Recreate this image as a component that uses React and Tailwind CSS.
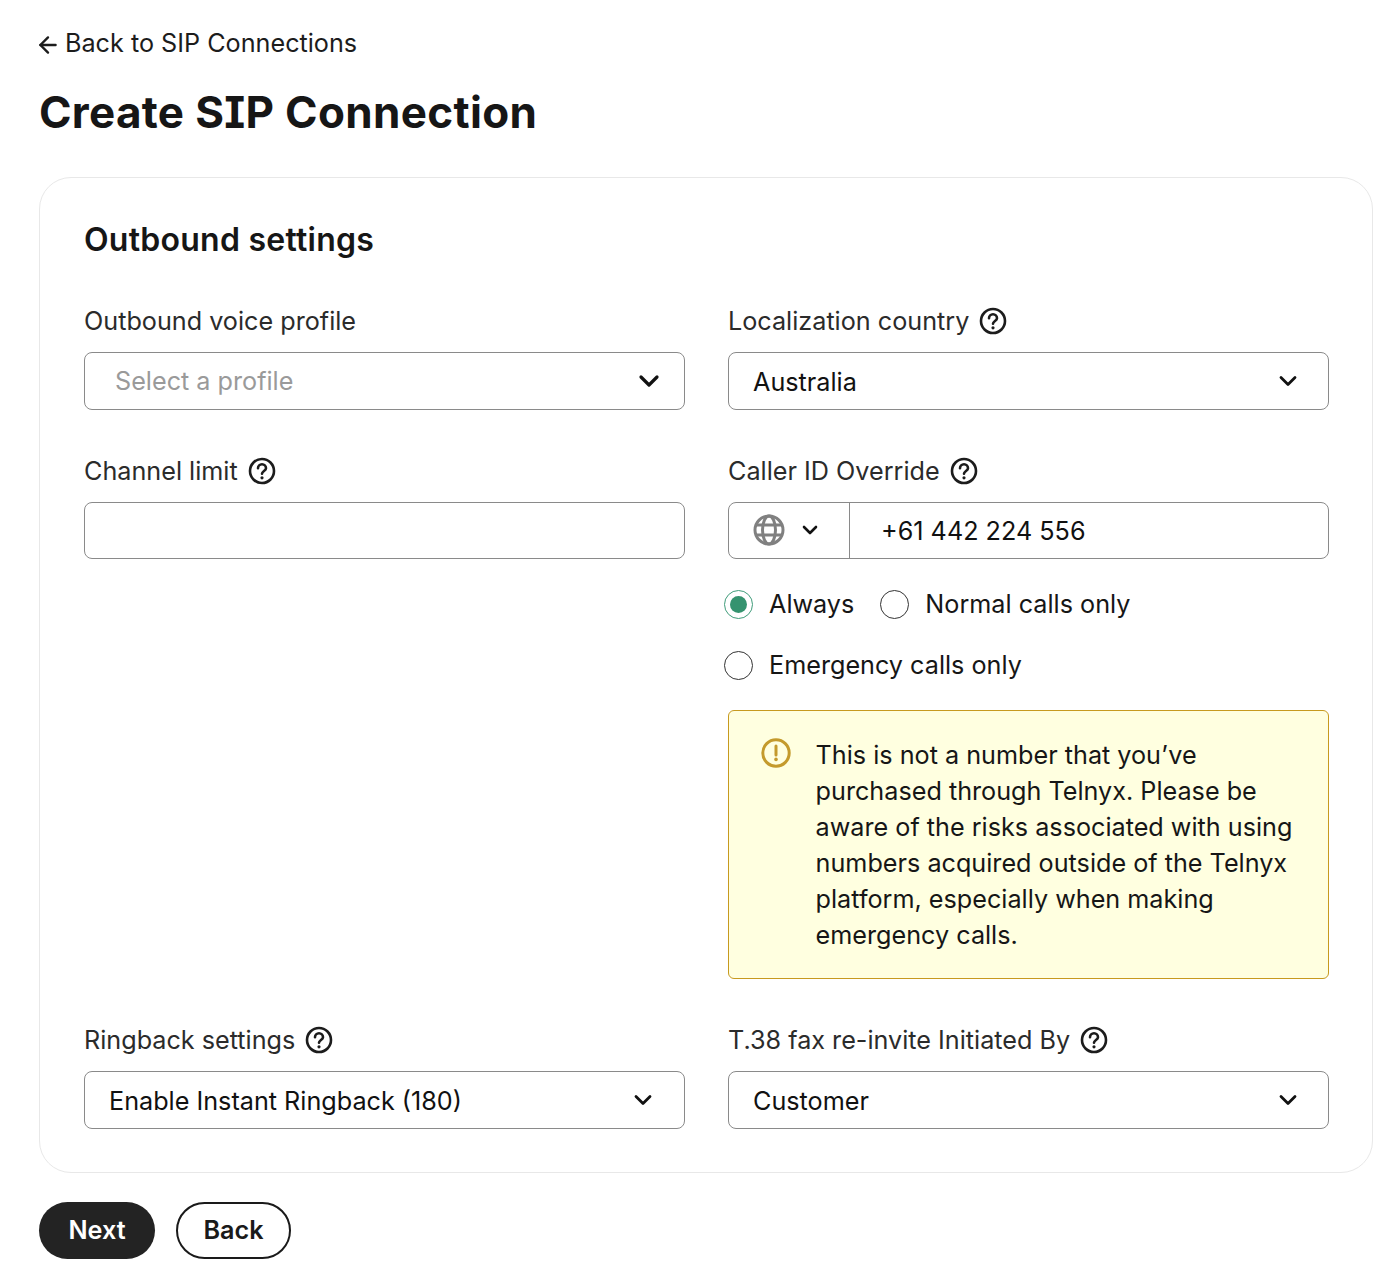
import React from 'react';
import { ChevronDown, ArrowLeft } from 'lucide-react';

const FONT = "font-['Inter','Liberation_Sans',sans-serif]";

// Help icon next to the field labels
const HelpIcon = () => (
  <svg width="28" height="28" viewBox="0 0 28 28" fill="none" className="shrink-0 text-[#1c1c1c]">
    <circle cx="14" cy="14" r="12" stroke="currentColor" strokeWidth="2.6" />
    <path d="M10 11.2a4 4 0 0 1 8 0c0 2.6-4 3-4 5.6" stroke="currentColor" strokeWidth="2.6" strokeLinecap="round" />
    <circle cx="14" cy="20.8" r="1.6" fill="currentColor" />
  </svg>
);

const GlobeIcon = () => (
  <svg width="32" height="32" viewBox="0 0 32 32" fill="none" stroke="#808080" strokeWidth="3" className="shrink-0 -mt-[2px]">
    <circle cx="16" cy="16" r="14" />
    <ellipse cx="16" cy="16" rx="6.5" ry="14" />
    <path d="M3.5 11h25M3.5 21h25" />
  </svg>
);

const FieldLabel = ({ children, help = true, gap = 'gap-[10px]' }) => (
  <div className={`flex items-center ${gap} h-[28px] text-[25.2px] leading-[28px] text-[#2b2b2b] mb-[17px]`}>
    <span>{children}</span>
    {help && <HelpIcon />}
  </div>
);

const Select = ({ value, placeholder, chevronClass = 'mr-[27px]', pad = 'pl-[24px]' }) => (
  <div className={`flex items-center justify-between h-[58px] rounded-[8px] border border-[#8a8a8a] bg-white ${pad} text-[25.2px]`}>
    <span className={placeholder ? 'text-[#9a9a9a] pt-[2px]' : 'text-[#111111] pt-[4px]'}>{value}</span>
    <ChevronDown size={placeholder ? 32 : 28} strokeWidth={2.4} className={`text-[#111111] -mt-[1px] ${chevronClass}`} />
  </div>
);

const Radio = ({ label, checked }) => (
  <label className="flex items-center gap-[16px] text-[25.2px] leading-[30px] text-[#161616]">
    <span className={`flex items-center justify-center w-[29px] h-[29px] rounded-full border-[1.5px] bg-white ${checked ? 'border-[#3f9c7a]' : 'border-[#333333]'}`}>
      {checked && <span className="w-[17px] h-[17px] rounded-full bg-[#35936f]" />}
    </span>
    {label}
  </label>
);

export default function App() {
  return (
    <div className={`${FONT} min-h-[1274px] bg-white pl-[39px] pr-[9px] pt-[26px] text-[#161616]`}>
      {/* Back link */}
      <a className="flex items-center h-[36px] text-[25.2px] text-[#1c1c1c]">
        <ArrowLeft size={26} strokeWidth={2.2} className="-ml-[4px] mr-[4px] mt-[2px]" />
        Back to SIP Connections
      </a>

      <h1 className="mt-[22px] text-[44px] leading-[56px] font-bold tracking-[0.32px] text-[#161616] [font-feature-settings:'ss02']">Create SIP Connection</h1>

      {/* Form card */}
      <div className="mt-[37px] h-[996px] rounded-[32px] border border-[#e8e8e8] bg-white px-[44px] pt-[41px]">
        <h2 className="text-[32px] leading-[42px] font-semibold tracking-[0.25px] text-[#161616] mb-[46px]">Outbound settings</h2>

        <div className="grid grid-cols-[601px_601px] gap-x-[43px]">
          <div>
            <FieldLabel help={false}>Outbound voice profile</FieldLabel>
            <Select value="Select a profile" placeholder pad="pl-[30px]" chevronClass="mr-[19px]" />
          </div>
          <div>
            <FieldLabel>Localization country</FieldLabel>
            <Select value="Australia" chevronClass="mr-[26px]" />
          </div>

          <div className="mt-[47px]">
            <FieldLabel>Channel limit</FieldLabel>
            <div className="h-[57px] rounded-[8px] border border-[#8a8a8a] bg-white" />
          </div>
          <div className="mt-[47px]">
            <FieldLabel>Caller ID Override</FieldLabel>
            <div className="flex h-[57px] rounded-[8px] border border-[#8a8a8a] bg-white text-[25.2px] text-[#111111]">
              <div className="flex items-center w-[121px] border-r border-[#8a8a8a] pl-[24px]">
                <GlobeIcon />
                <ChevronDown size={24} strokeWidth={2.6} className="ml-[13px] -mt-[2px]" />
              </div>
              <div className="flex items-center pl-[31px] pt-[2px]">+61 442 224 556</div>
            </div>

            <div className="-ml-[4px] mt-[30px] flex flex-col gap-[31px]">
              <div className="flex gap-[26px]">
                <Radio label="Always" checked />
                <Radio label="Normal calls only" />
              </div>
              <Radio label="Emergency calls only" />
            </div>

            {/* Warning */}
            <div className="mt-[30px] flex h-[269px] rounded-[6px] border border-[#c79a1f] bg-[#ffffe0] pl-[32px] pr-[20px] pt-[26px] text-[25.2px] leading-[36px] text-[#161616]">
              <svg width="30" height="30" viewBox="0 0 30 30" fill="none" className="shrink-0 mr-[24.6px] mt-[1px]">
                <circle cx="15" cy="15" r="13.2" stroke="#c49a2c" strokeWidth="3" />
                <path d="M15 8v9" stroke="#c49a2c" strokeWidth="3" strokeLinecap="round" />
                <circle cx="15" cy="21.4" r="1.8" fill="#c49a2c" />
              </svg>
              <p>This is not a number that you’ve purchased through Telnyx. Please be aware of the risks associated with using numbers acquired outside of the Telnyx platform, especially when making emergency calls.</p>
            </div>
          </div>

          <div className="mt-[47px]">
            <FieldLabel>Ringback settings</FieldLabel>
            <Select value="Enable Instant Ringback (180)" chevronClass="mr-[27px]" />
          </div>
          <div className="mt-[47px]">
            <FieldLabel>T.38 fax re-invite Initiated By</FieldLabel>
            <Select value="Customer" chevronClass="mr-[26px]" />
          </div>
        </div>
      </div>

      {/* Actions */}
      <div className="mt-[29px] flex gap-[21px] text-[25.2px] font-semibold">
        <button className="h-[57px] w-[116px] rounded-full bg-[#232323] text-white">Next</button>
        <button className="h-[57px] w-[115px] rounded-full border-2 border-[#1a1a1a] bg-white text-[#1a1a1a]">Back</button>
      </div>
    </div>
  );
}
